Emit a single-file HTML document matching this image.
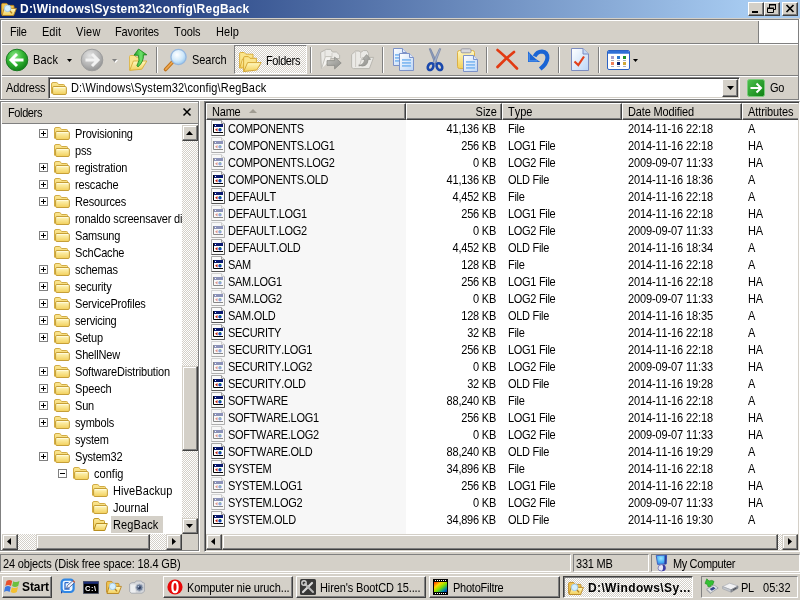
<!DOCTYPE html>
<html><head><meta charset="utf-8"><title>D:\Windows\System32\config\RegBack</title>
<style>
*{box-sizing:border-box;margin:0;padding:0}
html,body{width:800px;height:600px;overflow:hidden}
body{background:#D4D0C8;font-kerning:none;font-family:"Liberation Sans",sans-serif;font-size:11px;color:#000;line-height:13px;cursor:default}
#w{position:absolute;left:0;top:0;width:800px;height:600px;overflow:hidden;will-change:transform}
.a{position:absolute}
.t{position:absolute;white-space:nowrap;height:13px;line-height:13px;transform:scaleY(1.12);transform-origin:0 2px}
.hl{position:absolute;height:1px}
.vl{position:absolute;width:1px}
.dither{background-image:conic-gradient(#fff 25%,#D4D0C8 0 50%,#fff 0 75%,#D4D0C8 0);background-size:2px 2px}
.btn{position:absolute;background:#D4D0C8;border:1px solid;border-color:#fff #404040 #404040 #fff;box-shadow:inset -1px -1px 0 #808080,inset 1px 1px 0 #D4D0C8}
.sbtn{position:absolute;background:#D4D0C8;border:1px solid;border-color:#D4D0C8 #404040 #404040 #D4D0C8;box-shadow:inset -1px -1px 0 #808080,inset 1px 1px 0 #fff}
.sunk{position:absolute;border:1px solid;border-color:#808080 #fff #fff #808080}
.sunk2{position:absolute;border:1px solid;border-color:#808080 #fff #fff #808080;box-shadow:inset 1px 1px 0 #404040,inset -1px -1px 0 #D4D0C8}
.tsep{position:absolute;top:47px;width:2px;height:26px;border-left:1px solid #808080;border-right:1px solid #fff}
svg{position:absolute;overflow:visible}
</style></head>
<body><div id="w">
<svg width="0" height="0" style="position:absolute"><defs>
<linearGradient id="gF" x1="0" y1="0" x2="0" y2="1"><stop offset="0" stop-color="#FFF8C0"/><stop offset="1" stop-color="#F2CF5A"/></linearGradient>
<linearGradient id="gFb" x1="0" y1="0" x2="0" y2="1"><stop offset="0" stop-color="#FBE793"/><stop offset="1" stop-color="#EFCB58"/></linearGradient>
<radialGradient id="gGreen" cx="0.4" cy="0.3" r="0.75"><stop offset="0" stop-color="#8EE88A"/><stop offset="0.5" stop-color="#33B533"/><stop offset="1" stop-color="#0D7A14"/></radialGradient>
<radialGradient id="gGray" cx="0.4" cy="0.3" r="0.75"><stop offset="0" stop-color="#E4E4E4"/><stop offset="0.6" stop-color="#B4B4B4"/><stop offset="1" stop-color="#8E8E8E"/></radialGradient>
<radialGradient id="gLens" cx="0.4" cy="0.35" r="0.7"><stop offset="0" stop-color="#FFFFFF"/><stop offset="0.6" stop-color="#CFE8FA"/><stop offset="1" stop-color="#8EC3EE"/></radialGradient>
<linearGradient id="gDoc" x1="0" y1="0" x2="1" y2="1"><stop offset="0" stop-color="#FFFFFF"/><stop offset="1" stop-color="#BBD6F7"/></linearGradient>
<linearGradient id="gUp" x1="0" y1="0" x2="1" y2="0"><stop offset="0" stop-color="#1F9E1F"/><stop offset="0.55" stop-color="#6CE26C"/><stop offset="1" stop-color="#1E9A1E"/></linearGradient>
<radialGradient id="gMon" cx="0.45" cy="0.35" r="0.7"><stop offset="0" stop-color="#9CE4FF"/><stop offset="0.6" stop-color="#46B0F6"/><stop offset="1" stop-color="#3C7CE0"/></radialGradient>
<linearGradient id="gDis" x1="0" y1="0" x2="1" y2="1"><stop offset="0" stop-color="#C4C4C0"/><stop offset="1" stop-color="#8C8C88"/></linearGradient>
<linearGradient id="gGo" x1="0" y1="0" x2="1" y2="1"><stop offset="0" stop-color="#4DC24D"/><stop offset="1" stop-color="#0E7F12"/></linearGradient>
<linearGradient id="gRainbow" x1="0" y1="0" x2="1" y2="1"><stop offset="0" stop-color="#FF2A00"/><stop offset="0.3" stop-color="#FFD800"/><stop offset="0.55" stop-color="#7FE000"/><stop offset="0.8" stop-color="#0090A0"/><stop offset="1" stop-color="#0020C0"/></linearGradient>
<g id="folder"><path d="M0.5 13.5V4Q0.5 2.5 2 2.5H5.2Q6.2 2.5 6.8 3.4L7.6 4.5H12.5Q13.5 4.5 13.5 5.5V7" fill="url(#gFb)" stroke="#CDA437" stroke-width="0.9"/><rect x="1.6" y="6.5" width="13.8" height="8" rx="1.3" fill="url(#gF)" stroke="#C0962A" stroke-width="0.9"/><path d="M2.8 7.6H14.2" stroke="#FFFBDD" stroke-width="1"/></g>
<g id="folderopen"><path d="M1.5 13.5V4Q1.5 2.5 3 2.5H6Q7 2.5 7.6 3.4L8.2 4.5H11.5Q12.5 4.5 12.5 5.5V7.5" fill="url(#gFb)" stroke="#C39A2A"/><path d="M1.8 14.5L4.2 7.5H15.3L12.8 14.5Z" fill="url(#gF)" stroke="#B88E1E" stroke-linejoin="round"/></g>
<g id="fileico"><path d="M0.5 0.5H10.5L13.5 3.5V15.5H0.5Z" fill="#FAFAFA" stroke="#A8A8A8"/><path d="M13.5 3.5V15.5H0.5" fill="none" stroke="#585858"/><path d="M10.5 0.5V3.5H13.5" fill="#E8E8E8" stroke="#9C9C9C"/><rect x="2" y="4" width="10" height="9" fill="#fff"/><rect x="2" y="4" width="10" height="3" fill="#0A1A70"/><rect x="4" y="5" width="1" height="1" fill="#fff"/><path d="M2.5 4V12.5H12" fill="none" stroke="#000"/><path d="M6.5 8L4 9.7L6.5 11.4Z" fill="#C02010"/><circle cx="9" cy="9.8" r="1.7" fill="#1040C0"/><rect x="8.5" y="8" width="1.4" height="1.2" fill="#20A020"/></g>
<g id="expl"><path d="M0.6 13.5V3.6Q0.6 2.4 1.8 2.4H5Q6 2.4 6.6 3.3L7.2 4.4H12Q13 4.4 13 5.4V7.5" fill="#F0C452" stroke="#C08A20" stroke-width="0.9"/><path d="M1 14.5L3.2 7.4H15.4L12.6 14.5Z" fill="url(#gF)" stroke="#B88420" stroke-width="0.9" stroke-linejoin="round"/><circle cx="6.6" cy="7.4" r="3.3" fill="#D4F0FF" stroke="#9CC4E4" stroke-width="0.9"/><path d="M9 10L11 12.4" stroke="#B88420" stroke-width="1.4"/></g>
</defs></svg>
<div class="a" style="left:0;top:0;width:800px;height:18px;background:linear-gradient(90deg,#0A246A 0,#0A246A 18px,#A6CAF0 745px,#A6CAF0 100%)"></div>
<svg style="left:1px;top:1px" width="16" height="16"><use href="#expl"/></svg>
<div class="t" style="left:20px;top:2px;font-size:12px;font-weight:bold;letter-spacing:0.219px;color:#fff;">D:\Windows\System32\config\RegBack</div>
<div class="btn" style="left:748px;top:2px;width:16px;height:14px"></div>
<div class="btn" style="left:764px;top:2px;width:16px;height:14px"></div>
<div class="btn" style="left:782px;top:2px;width:16px;height:14px"></div>
<div class="a" style="left:752px;top:11px;width:6px;height:2px;background:#000"></div>
<svg style="left:767px;top:4px" width="9" height="9"><path d="M2.5 1V4M2.5 1H8.5V5.5H7M2 0.5H9M0.5 4.5H6.5V8.5H0.5ZM0 4H7" fill="none" stroke="#000" stroke-width="1"/></svg>
<svg style="left:786px;top:5px" width="8" height="7"><path d="M0.5 0L7.5 7M7.5 0L0.5 7" stroke="#000" stroke-width="1.7"/></svg>
<div class="hl" style="left:0;top:19px;width:799px;background:#808080"></div>
<div class="hl" style="left:1px;top:20px;width:798px;background:#fff"></div>
<div class="vl" style="left:0;top:19px;height:81px;background:#808080"></div>
<div class="vl" style="left:1px;top:20px;height:79px;background:#fff"></div>
<div class="vl" style="left:798px;top:19px;height:81px;background:#808080"></div>
<div class="vl" style="left:799px;top:19px;height:82px;background:#fff"></div>
<div class="hl" style="left:0;top:99px;width:799px;background:#808080"></div>
<div class="hl" style="left:0;top:100px;width:800px;background:#fff"></div>
<div class="a" style="left:759px;top:20px;width:39px;height:23px;background:#fff"></div>
<div class="vl" style="left:758px;top:21px;height:22px;background:#808080"></div>
<div class="hl" style="left:2px;top:43px;width:796px;background:#808080"></div>
<div class="hl" style="left:2px;top:44px;width:796px;background:#fff"></div>
<div class="hl" style="left:2px;top:75px;width:796px;background:#808080"></div>
<div class="hl" style="left:2px;top:76px;width:796px;background:#fff"></div>
<div class="t" style="left:10px;top:25px;letter-spacing:-0.309px;">File</div>
<div class="t" style="left:42px;top:25px;letter-spacing:0.008px;">Edit</div>
<div class="t" style="left:76px;top:25px;letter-spacing:0.164px;">View</div>
<div class="t" style="left:115px;top:25px;letter-spacing:-0.139px;">Favorites</div>
<div class="t" style="left:174px;top:25px;letter-spacing:-0.081px;">Tools</div>
<div class="t" style="left:216px;top:25px;letter-spacing:0.094px;">Help</div>
<svg style="left:5px;top:48px" width="24" height="24"><circle cx="12" cy="12" r="10.8" fill="url(#gGreen)" stroke="#1A7A22" stroke-width="1"/><path d="M12 6L6 12L12 18M6.5 12H18.5" fill="none" stroke="#fff" stroke-width="3" stroke-linejoin="miter" stroke-linecap="butt"/></svg>
<div class="t" style="left:33px;top:53px;letter-spacing:0.208px;">Back</div>
<svg style="left:67px;top:59px" width="5" height="3"><path d="M0 0H5L2.5 3Z" fill="#000"/></svg>
<svg style="left:80px;top:48px" width="24" height="24"><circle cx="12" cy="12" r="10.8" fill="url(#gGray)" stroke="#9C9C9C" stroke-width="1"/><path d="M12 6L18 12L12 18M17.5 12H5.5" fill="none" stroke="#F2F2F2" stroke-width="3" stroke-linejoin="miter" stroke-linecap="butt"/></svg>
<svg style="left:112px;top:59px" width="6" height="4"><path d="M1 1H6L3.5 4Z" fill="#fff"/><path d="M0 0H5L2.5 3Z" fill="#808080"/></svg>
<svg style="left:127px;top:47px" width="22" height="25"><path d="M2.5 23V9.6Q2.5 8.5 3.6 8.5H7.6L9.2 10.2H13.5V14" fill="#FAE48C" stroke="#DDB648" stroke-width="0.9"/><path d="M2.7 23.4L6.4 14H19.8L14.8 22.2Z" fill="url(#gF)" stroke="#D6AC3A" stroke-width="0.9" stroke-linejoin="round"/><path d="M7 8.2L11.6 2L19.8 7.8L16.4 7.9Q17 14.5 11 19.9L9.9 18.6Q13.2 13.6 11.4 8.3Z" fill="url(#gUp)" stroke="#168416" stroke-width="0.8" stroke-linejoin="round"/></svg>
<div class="tsep" style="left:156px"></div>
<svg style="left:163px;top:48px" width="25" height="24"><path d="M2.5 21.5L10 13.5" stroke="#C0741C" stroke-width="3.6" stroke-linecap="round"/><path d="M2.8 21.2L10 13.5" stroke="#F0A850" stroke-width="1.6" stroke-linecap="round"/><circle cx="15.5" cy="9" r="7.6" fill="url(#gLens)" stroke="#94B6DE" stroke-width="1.4"/></svg>
<div class="t" style="left:192px;top:53px;letter-spacing:-0.06px;">Search</div>
<div class="a dither" style="left:234px;top:45px;width:73px;height:29px;border:1px solid;border-color:#808080 #fff #fff #808080"></div>
<svg style="left:238px;top:51px" width="24" height="22"><path d="M1.6 16.8V2.6Q1.6 1.5 2.7 1.5H6.2L7.8 3.2H15V8" fill="#FBE58C" stroke="#D8A930" stroke-width="0.9"/><path d="M1.7 17L4.5 8H14.5L11.5 17Z" fill="url(#gF)" stroke="#D8A930" stroke-width="0.9" stroke-linejoin="round"/><path d="M5.6 20.4V6.8Q5.6 5.6 6.7 5.6H10.4L12 7.3H18.4V11" fill="#FBE58C" stroke="#D4A42C" stroke-width="0.9"/><path d="M5.7 20.6L9.6 11.6H23.2L18.8 19Z" fill="url(#gF)" stroke="#D0A02A" stroke-width="0.9" stroke-linejoin="round"/></svg>
<div class="t" style="left:266px;top:54px;letter-spacing:-0.384px;">Folders</div>
<div class="tsep" style="left:310px"></div>
<svg style="left:319px;top:48px" width="24" height="24"><path d="M2.4 20.4L1.6 4.4L7.2 1.4H11.8L13.4 4H17.4L20.6 7V10.5H10" fill="#EBEAE6" stroke="#B4B2AC" stroke-width="0.9" stroke-linejoin="round"/><path d="M6 2.4V9M13 5V9" stroke="#C8C6C0" stroke-width="0.8"/><path d="M2.6 20.6L6.4 8.6H12.4L11 12.5" fill="#F4F3F0" stroke="#BEBCB6" stroke-width="0.9" stroke-linejoin="round"/><path d="M8 12.6H15.6V9L22.2 15L15.6 21V17.4H8Z" fill="url(#gDis)" stroke="#868682" stroke-width="0.7" stroke-linejoin="round"/></svg>
<svg style="left:350px;top:49px" width="25" height="23"><path d="M1.6 18.4V5.6L5.6 2H9.4L10.6 3.6L13.4 1.6H17L18.6 4.6V8.4H23.6L19.4 19.6H3.4Z" fill="#EBEAE6" stroke="#B4B2AC" stroke-width="0.9" stroke-linejoin="round"/><path d="M5.6 2.6V18M10.6 4V9M18.4 8.6H12L9 18" fill="none" stroke="#C4C2BC" stroke-width="0.8"/><path d="M8.6 16.2Q13.6 16.6 14.8 10.4H12.4L16.6 5.6L20.6 10.4H18.2Q17.4 19.4 8.6 16.2Z" fill="url(#gDis)" stroke="#8E8E88" stroke-width="0.7" stroke-linejoin="round"/></svg>
<div class="tsep" style="left:382px"></div>
<svg style="left:392px;top:48px" width="23" height="24"><path d="M1.5 0.5H10.5L14.5 4.5V17.5H1.5Z" fill="url(#gDoc)" stroke="#7C92C8"/><path d="M10.5 0.5V4.5H14.5" fill="#DDE8FA" stroke="#7C92C8"/><rect x="3" y="6" width="6" height="1.8" fill="#86BCF2"/><rect x="3" y="9" width="6" height="1.8" fill="#86BCF2"/><rect x="3" y="12" width="6" height="1.8" fill="#86BCF2"/><path d="M7.5 5.5H17.5L21.5 9.5V22.5H7.5Z" fill="url(#gDoc)" stroke="#7C92C8"/><path d="M17.5 5.5V9.5H21.5" fill="#DDE8FA" stroke="#7C92C8"/><rect x="10" y="11" width="9" height="1.8" fill="#86BCF2"/><rect x="10" y="14" width="9" height="1.8" fill="#86BCF2"/><rect x="10" y="17" width="9" height="1.8" fill="#86BCF2"/></svg>
<svg style="left:426px;top:48px" width="18" height="24"><path d="M3.2 0.8L4.6 0.6L11.4 15.2L9 16Z" fill="#8C9CBC" stroke="#5C6C94" stroke-width="0.5"/><path d="M14.8 0.8L13.4 0.6L6.6 15.2L9 16Z" fill="#A4B2CC" stroke="#5C6C94" stroke-width="0.5"/><ellipse cx="4.6" cy="18.6" rx="2.6" ry="3.6" transform="rotate(28 4.6 18.6)" fill="#D4D0C8" stroke="#1A48AC" stroke-width="2.6"/><ellipse cx="13.4" cy="18.6" rx="2.6" ry="3.6" transform="rotate(-28 13.4 18.6)" fill="#D4D0C8" stroke="#1A48AC" stroke-width="2.6"/></svg>
<svg style="left:456px;top:48px" width="23" height="24"><rect x="1.5" y="2.5" width="17" height="18" rx="2" fill="url(#gF)" stroke="#DCB044"/><rect x="5" y="0.8" width="10" height="4" rx="1.2" fill="#D8D8DC" stroke="#9C9CA4"/><path d="M7.5 7.5H17.5L21.5 11.5V23.5H7.5Z" fill="url(#gDoc)" stroke="#7C92C8"/><path d="M17.5 7.5V11.5H21.5" fill="#DDE8FA" stroke="#7C92C8"/><rect x="10" y="13" width="9" height="1.8" fill="#86BCF2"/><rect x="10" y="16" width="9" height="1.8" fill="#86BCF2"/><rect x="10" y="19" width="9" height="1.8" fill="#86BCF2"/></svg>
<div class="tsep" style="left:486px"></div>
<svg style="left:495px;top:48px" width="24" height="23"><path d="M2.5 2Q10 8 22 20.5" stroke="#E23A12" stroke-width="2.6" stroke-linecap="round" fill="none"/><path d="M19 4Q10 11 2.5 19" stroke="#E23A12" stroke-width="2.8" stroke-linecap="round" fill="none"/></svg>
<svg style="left:527px;top:49px" width="23" height="22"><path d="M7.6 7.4Q10 2.3 15 2.4Q20.6 3 20.4 9Q20 14.6 13.2 20" fill="none" stroke="#1A64D4" stroke-width="4"/><path d="M1 2.2V13H13.4Q9 10.5 6.2 7.4Q3.6 5 1 2.2Z" fill="#1A64D4"/><path d="M2.2 4.5V11.8H10.5" fill="none" stroke="#4C90EC" stroke-width="1.2"/></svg>
<div class="tsep" style="left:558px"></div>
<svg style="left:570px;top:48px" width="20" height="24"><path d="M1.5 0.5H13L18.5 6V22.5H1.5Z" fill="url(#gDoc)" stroke="#7C8CC0"/><path d="M13 0.5V6H18.5" fill="#C4D8F6" stroke="#7C8CC0"/><path d="M4.5 13.5L8.3 17L14 8.5" fill="none" stroke="#E2401C" stroke-width="2.2" stroke-linejoin="miter"/></svg>
<div class="tsep" style="left:598px"></div>
<svg style="left:607px;top:50px" width="24" height="21"><rect x="0.5" y="0.5" width="22" height="19" rx="1.5" fill="#fff" stroke="#2A62C4"/><path d="M1 3.8V2Q1 1 2 1H21Q22 1 22 2V3.8Z" fill="#2F6FD6"/><rect x="4" y="6" width="3" height="3" fill="#A49CCC"/><rect x="4" y="10" width="3" height="1" fill="#A8B0C0"/><rect x="10" y="6" width="3" height="3" fill="#2C78D0"/><rect x="10" y="10" width="3" height="1" fill="#A8B0C0"/><rect x="16" y="6" width="3" height="3" fill="#1C9428"/><rect x="16" y="10" width="3" height="1" fill="#A8B0C0"/><rect x="4" y="12" width="3" height="3" fill="#F08058"/><rect x="4" y="16" width="3" height="1" fill="#A8B0C0"/><rect x="10" y="12" width="3" height="3" fill="#0C2470"/><rect x="10" y="16" width="3" height="1" fill="#A8B0C0"/><rect x="16" y="12" width="3" height="3" fill="#D0A838"/><rect x="16" y="16" width="3" height="1" fill="#A8B0C0"/></svg>
<svg style="left:633px;top:59px" width="5" height="3"><path d="M0 0H5L2.5 3Z" fill="#000"/></svg>
<div class="t" style="left:6px;top:81px;letter-spacing:-0.137px;">Address</div>
<div class="sunk2" style="left:48px;top:77px;width:692px;height:22px;background:#fff"></div>
<svg style="left:51px;top:80px" width="16" height="16"><use href="#folder"/></svg>
<div class="t" style="left:71px;top:81px;letter-spacing:0.137px;">D:\Windows\System32\config\RegBack</div>
<div class="btn" style="left:722px;top:79px;width:16px;height:18px"></div>
<svg style="left:727px;top:86px" width="7" height="4"><path d="M0 0h7l-3.5 4z" fill="#000"/></svg>
<svg style="left:747px;top:79px" width="18" height="18"><rect x="0.5" y="0.5" width="17" height="17" rx="2" fill="url(#gGo)" stroke="#7CCB7C"/><path d="M3.5 9H13M9.5 4.5L14 9L9.5 13.5" fill="none" stroke="#fff" stroke-width="2"/></svg>
<div class="t" style="left:770px;top:81px;letter-spacing:-0.344px;">Go</div>
<div class="hl" style="left:0;top:101px;width:199px;background:#808080"></div>
<div class="vl" style="left:0;top:101px;height:451px;background:#808080"></div>
<div class="hl" style="left:1px;top:102px;width:197px;background:#fff"></div>
<div class="vl" style="left:1px;top:102px;height:449px;background:#fff"></div>
<div class="vl" style="left:198px;top:102px;height:449px;background:#808080"></div>
<div class="hl" style="left:1px;top:550px;width:198px;background:#808080"></div>
<div class="vl" style="left:199px;top:101px;height:451px;background:#fff"></div>
<div class="hl" style="left:0;top:551px;width:200px;background:#fff"></div>
<div class="hl" style="left:2px;top:123px;width:196px;background:#808080"></div>
<div class="t" style="left:8px;top:106px;letter-spacing:-0.384px;">Folders</div>
<svg style="left:183px;top:108px" width="8" height="8"><path d="M0.5 0.5L7.5 7.5M7.5 0.5L0.5 7.5" stroke="#000" stroke-width="1.5"/></svg>
<div class="a" style="left:2px;top:124px;width:196px;height:426px;background:#fff"></div>
<div class="a" style="left:1px;top:124px;width:181px;height:410px;overflow:hidden">
<svg style="left:38px;top:5px" width="9" height="9"><rect x="0.5" y="0.5" width="8" height="8" fill="#fff" stroke="#808080"/><path d="M2 4.5H7M4.5 2V7" stroke="#000" fill="none"/></svg>
<svg style="left:53px;top:1px" width="16" height="16"><use href="#folder"/></svg>
<div class="t" style="left:74px;top:3px;letter-spacing:-0.18px;">Provisioning</div>
<svg style="left:53px;top:18px" width="16" height="16"><use href="#folder"/></svg>
<div class="t" style="left:74px;top:20px;letter-spacing:-0.18px;">pss</div>
<svg style="left:38px;top:39px" width="9" height="9"><rect x="0.5" y="0.5" width="8" height="8" fill="#fff" stroke="#808080"/><path d="M2 4.5H7M4.5 2V7" stroke="#000" fill="none"/></svg>
<svg style="left:53px;top:35px" width="16" height="16"><use href="#folder"/></svg>
<div class="t" style="left:74px;top:37px;letter-spacing:-0.18px;">registration</div>
<svg style="left:38px;top:56px" width="9" height="9"><rect x="0.5" y="0.5" width="8" height="8" fill="#fff" stroke="#808080"/><path d="M2 4.5H7M4.5 2V7" stroke="#000" fill="none"/></svg>
<svg style="left:53px;top:52px" width="16" height="16"><use href="#folder"/></svg>
<div class="t" style="left:74px;top:54px;letter-spacing:-0.143px;">rescache</div>
<svg style="left:38px;top:73px" width="9" height="9"><rect x="0.5" y="0.5" width="8" height="8" fill="#fff" stroke="#808080"/><path d="M2 4.5H7M4.5 2V7" stroke="#000" fill="none"/></svg>
<svg style="left:53px;top:69px" width="16" height="16"><use href="#folder"/></svg>
<div class="t" style="left:74px;top:71px;letter-spacing:-0.18px;">Resources</div>
<svg style="left:53px;top:86px" width="16" height="16"><use href="#folder"/></svg>
<div class="t" style="left:74px;top:88px;letter-spacing:-0.18px;">ronaldo screensaver di</div>
<svg style="left:38px;top:107px" width="9" height="9"><rect x="0.5" y="0.5" width="8" height="8" fill="#fff" stroke="#808080"/><path d="M2 4.5H7M4.5 2V7" stroke="#000" fill="none"/></svg>
<svg style="left:53px;top:103px" width="16" height="16"><use href="#folder"/></svg>
<div class="t" style="left:74px;top:105px;letter-spacing:-0.18px;">Samsung</div>
<svg style="left:53px;top:120px" width="16" height="16"><use href="#folder"/></svg>
<div class="t" style="left:74px;top:122px;letter-spacing:-0.18px;">SchCache</div>
<svg style="left:38px;top:141px" width="9" height="9"><rect x="0.5" y="0.5" width="8" height="8" fill="#fff" stroke="#808080"/><path d="M2 4.5H7M4.5 2V7" stroke="#000" fill="none"/></svg>
<svg style="left:53px;top:137px" width="16" height="16"><use href="#folder"/></svg>
<div class="t" style="left:74px;top:139px;letter-spacing:-0.18px;">schemas</div>
<svg style="left:38px;top:158px" width="9" height="9"><rect x="0.5" y="0.5" width="8" height="8" fill="#fff" stroke="#808080"/><path d="M2 4.5H7M4.5 2V7" stroke="#000" fill="none"/></svg>
<svg style="left:53px;top:154px" width="16" height="16"><use href="#folder"/></svg>
<div class="t" style="left:74px;top:156px;letter-spacing:-0.18px;">security</div>
<svg style="left:38px;top:175px" width="9" height="9"><rect x="0.5" y="0.5" width="8" height="8" fill="#fff" stroke="#808080"/><path d="M2 4.5H7M4.5 2V7" stroke="#000" fill="none"/></svg>
<svg style="left:53px;top:171px" width="16" height="16"><use href="#folder"/></svg>
<div class="t" style="left:74px;top:173px;letter-spacing:-0.18px;">ServiceProfiles</div>
<svg style="left:38px;top:192px" width="9" height="9"><rect x="0.5" y="0.5" width="8" height="8" fill="#fff" stroke="#808080"/><path d="M2 4.5H7M4.5 2V7" stroke="#000" fill="none"/></svg>
<svg style="left:53px;top:188px" width="16" height="16"><use href="#folder"/></svg>
<div class="t" style="left:74px;top:190px;letter-spacing:-0.212px;">servicing</div>
<svg style="left:38px;top:209px" width="9" height="9"><rect x="0.5" y="0.5" width="8" height="8" fill="#fff" stroke="#808080"/><path d="M2 4.5H7M4.5 2V7" stroke="#000" fill="none"/></svg>
<svg style="left:53px;top:205px" width="16" height="16"><use href="#folder"/></svg>
<div class="t" style="left:74px;top:207px;letter-spacing:-0.18px;">Setup</div>
<svg style="left:53px;top:222px" width="16" height="16"><use href="#folder"/></svg>
<div class="t" style="left:74px;top:224px;letter-spacing:-0.18px;">ShellNew</div>
<svg style="left:38px;top:243px" width="9" height="9"><rect x="0.5" y="0.5" width="8" height="8" fill="#fff" stroke="#808080"/><path d="M2 4.5H7M4.5 2V7" stroke="#000" fill="none"/></svg>
<svg style="left:53px;top:239px" width="16" height="16"><use href="#folder"/></svg>
<div class="t" style="left:74px;top:241px;letter-spacing:-0.18px;">SoftwareDistribution</div>
<svg style="left:38px;top:260px" width="9" height="9"><rect x="0.5" y="0.5" width="8" height="8" fill="#fff" stroke="#808080"/><path d="M2 4.5H7M4.5 2V7" stroke="#000" fill="none"/></svg>
<svg style="left:53px;top:256px" width="16" height="16"><use href="#folder"/></svg>
<div class="t" style="left:74px;top:258px;letter-spacing:-0.135px;">Speech</div>
<svg style="left:38px;top:277px" width="9" height="9"><rect x="0.5" y="0.5" width="8" height="8" fill="#fff" stroke="#808080"/><path d="M2 4.5H7M4.5 2V7" stroke="#000" fill="none"/></svg>
<svg style="left:53px;top:273px" width="16" height="16"><use href="#folder"/></svg>
<div class="t" style="left:74px;top:275px;letter-spacing:-0.18px;">Sun</div>
<svg style="left:38px;top:294px" width="9" height="9"><rect x="0.5" y="0.5" width="8" height="8" fill="#fff" stroke="#808080"/><path d="M2 4.5H7M4.5 2V7" stroke="#000" fill="none"/></svg>
<svg style="left:53px;top:290px" width="16" height="16"><use href="#folder"/></svg>
<div class="t" style="left:74px;top:292px;letter-spacing:-0.18px;">symbols</div>
<svg style="left:53px;top:307px" width="16" height="16"><use href="#folder"/></svg>
<div class="t" style="left:74px;top:309px;letter-spacing:-0.18px;">system</div>
<svg style="left:38px;top:328px" width="9" height="9"><rect x="0.5" y="0.5" width="8" height="8" fill="#fff" stroke="#808080"/><path d="M2 4.5H7M4.5 2V7" stroke="#000" fill="none"/></svg>
<svg style="left:53px;top:324px" width="16" height="16"><use href="#folder"/></svg>
<div class="t" style="left:74px;top:326px;letter-spacing:-0.18px;">System32</div>
<svg style="left:57px;top:345px" width="9" height="9"><rect x="0.5" y="0.5" width="8" height="8" fill="#fff" stroke="#808080"/><path d="M2 4.5H7" stroke="#000" fill="none"/></svg>
<svg style="left:72px;top:341px" width="16" height="16"><use href="#folder"/></svg>
<div class="t" style="left:93px;top:343px;letter-spacing:0.023px;">config</div>
<svg style="left:91px;top:358px" width="16" height="16"><use href="#folder"/></svg>
<div class="t" style="left:112px;top:360px;letter-spacing:0.07px;">HiveBackup</div>
<svg style="left:91px;top:375px" width="16" height="16"><use href="#folder"/></svg>
<div class="t" style="left:112px;top:377px;letter-spacing:-0.054px;">Journal</div>
<svg style="left:91px;top:392px" width="16" height="16"><use href="#folderopen"/></svg>
<div class="a" style="left:110px;top:392px;width:52px;height:17px;background:#D4D0C8"></div>
<div class="t" style="left:112px;top:394px;letter-spacing:0.108px;">RegBack</div>
</div>
<div class="a dither" style="left:182px;top:125px;width:16px;height:409px"></div>
<div class="sbtn" style="left:182px;top:125px;width:16px;height:16px"></div>
<svg style="left:186px;top:131px" width="7" height="4"><path d="M0 4h7l-3.5-4z" fill="#000"/></svg>
<div class="sbtn" style="left:182px;top:518px;width:16px;height:16px"></div>
<svg style="left:186px;top:524px" width="7" height="4"><path d="M0 0h7l-3.5 4z" fill="#000"/></svg>
<div class="sbtn" style="left:182px;top:366px;width:16px;height:85px"></div>
<div class="a dither" style="left:2px;top:534px;width:180px;height:16px"></div>
<div class="a" style="left:182px;top:534px;width:16px;height:16px;background:#D4D0C8"></div>
<div class="sbtn" style="left:2px;top:534px;width:16px;height:16px"></div>
<svg style="left:7px;top:538px" width="4" height="7"><path d="M4 0v7l-4-3.5z" fill="#000"/></svg>
<div class="sbtn" style="left:166px;top:534px;width:16px;height:16px"></div>
<svg style="left:172px;top:538px" width="4" height="7"><path d="M0 0v7l4-3.5z" fill="#000"/></svg>
<div class="sbtn" style="left:36px;top:534px;width:114px;height:16px"></div>
<div class="sunk2" style="left:204px;top:101px;width:596px;height:451px;background:#fff"></div>
<div class="a" style="left:206px;top:103px;width:592px;height:17px;background:#D4D0C8;overflow:hidden">
<div class="a" style="left:0px;top:0;width:200px;height:17px;border:1px solid;border-color:#fff #404040 #404040 #fff;box-shadow:inset -1px -1px 0 #808080"></div>
<div class="a" style="left:200px;top:0;width:96px;height:17px;border:1px solid;border-color:#fff #404040 #404040 #fff;box-shadow:inset -1px -1px 0 #808080"></div>
<div class="a" style="left:296px;top:0;width:120px;height:17px;border:1px solid;border-color:#fff #404040 #404040 #fff;box-shadow:inset -1px -1px 0 #808080"></div>
<div class="a" style="left:416px;top:0;width:120px;height:17px;border:1px solid;border-color:#fff #404040 #404040 #fff;box-shadow:inset -1px -1px 0 #808080"></div>
<div class="a" style="left:536px;top:0;width:80px;height:17px;border:1px solid;border-color:#fff #404040 #404040 #fff;box-shadow:inset -1px -1px 0 #808080"></div>
</div>
<div class="t" style="left:212px;top:105px;letter-spacing:-0.211px;">Name</div>
<div class="t" style="left:406px;top:105px;width:91px;text-align:right;">Size</div>
<div class="t" style="left:508px;top:105px;letter-spacing:-0.017px;">Type</div>
<div class="t" style="left:628px;top:105px;letter-spacing:-0.144px;">Date Modified</div>
<div class="t" style="left:748px;top:105px;letter-spacing:-0.097px;">Attributes</div>
<svg style="left:249px;top:109px" width="8" height="4"><path d="M0 4L4 0L8 4Z" fill="#A09C92"/></svg>
<div class="a" style="left:206px;top:120px;width:200px;height:414px;background:#F7F7F7"></div>
<svg style="left:211px;top:120px" width="15" height="16"><use href="#fileico"/></svg>
<div class="t" style="left:228px;top:122px;letter-spacing:-0.31px;">COMPONENTS</div>
<div class="t" style="left:406px;top:122px;letter-spacing:-0.22px;width:90px;text-align:right;">41,136 KB</div>
<div class="t" style="left:508px;top:122px;letter-spacing:-0.3px;">File</div>
<div class="t" style="left:628px;top:122px;letter-spacing:-0.12px;">2014-11-16 22:18</div>
<div class="t" style="left:748px;top:122px;letter-spacing:-0.2px;">A</div>
<svg style="left:211px;top:137px" width="15" height="16"><use href="#fileico" opacity="0.45"/></svg>
<div class="t" style="left:228px;top:139px;letter-spacing:-0.31px;">COMPONENTS.LOG1</div>
<div class="t" style="left:406px;top:139px;letter-spacing:-0.22px;width:90px;text-align:right;">256 KB</div>
<div class="t" style="left:508px;top:139px;letter-spacing:-0.3px;">LOG1 File</div>
<div class="t" style="left:628px;top:139px;letter-spacing:-0.12px;">2014-11-16 22:18</div>
<div class="t" style="left:748px;top:139px;letter-spacing:-0.2px;">HA</div>
<svg style="left:211px;top:154px" width="15" height="16"><use href="#fileico" opacity="0.45"/></svg>
<div class="t" style="left:228px;top:156px;letter-spacing:-0.31px;">COMPONENTS.LOG2</div>
<div class="t" style="left:406px;top:156px;letter-spacing:-0.22px;width:90px;text-align:right;">0 KB</div>
<div class="t" style="left:508px;top:156px;letter-spacing:-0.3px;">LOG2 File</div>
<div class="t" style="left:628px;top:156px;letter-spacing:-0.12px;">2009-09-07 11:33</div>
<div class="t" style="left:748px;top:156px;letter-spacing:-0.2px;">HA</div>
<svg style="left:211px;top:171px" width="15" height="16"><use href="#fileico"/></svg>
<div class="t" style="left:228px;top:173px;letter-spacing:-0.31px;">COMPONENTS.OLD</div>
<div class="t" style="left:406px;top:173px;letter-spacing:-0.22px;width:90px;text-align:right;">41,136 KB</div>
<div class="t" style="left:508px;top:173px;letter-spacing:-0.3px;">OLD File</div>
<div class="t" style="left:628px;top:173px;letter-spacing:-0.12px;">2014-11-16 18:36</div>
<div class="t" style="left:748px;top:173px;letter-spacing:-0.2px;">A</div>
<svg style="left:211px;top:188px" width="15" height="16"><use href="#fileico"/></svg>
<div class="t" style="left:228px;top:190px;letter-spacing:-0.31px;">DEFAULT</div>
<div class="t" style="left:406px;top:190px;letter-spacing:-0.22px;width:90px;text-align:right;">4,452 KB</div>
<div class="t" style="left:508px;top:190px;letter-spacing:-0.3px;">File</div>
<div class="t" style="left:628px;top:190px;letter-spacing:-0.12px;">2014-11-16 22:18</div>
<div class="t" style="left:748px;top:190px;letter-spacing:-0.2px;">A</div>
<svg style="left:211px;top:205px" width="15" height="16"><use href="#fileico" opacity="0.45"/></svg>
<div class="t" style="left:228px;top:207px;letter-spacing:-0.31px;">DEFAULT.LOG1</div>
<div class="t" style="left:406px;top:207px;letter-spacing:-0.22px;width:90px;text-align:right;">256 KB</div>
<div class="t" style="left:508px;top:207px;letter-spacing:-0.3px;">LOG1 File</div>
<div class="t" style="left:628px;top:207px;letter-spacing:-0.12px;">2014-11-16 22:18</div>
<div class="t" style="left:748px;top:207px;letter-spacing:-0.2px;">HA</div>
<svg style="left:211px;top:222px" width="15" height="16"><use href="#fileico" opacity="0.45"/></svg>
<div class="t" style="left:228px;top:224px;letter-spacing:-0.31px;">DEFAULT.LOG2</div>
<div class="t" style="left:406px;top:224px;letter-spacing:-0.22px;width:90px;text-align:right;">0 KB</div>
<div class="t" style="left:508px;top:224px;letter-spacing:-0.3px;">LOG2 File</div>
<div class="t" style="left:628px;top:224px;letter-spacing:-0.12px;">2009-09-07 11:33</div>
<div class="t" style="left:748px;top:224px;letter-spacing:-0.2px;">HA</div>
<svg style="left:211px;top:239px" width="15" height="16"><use href="#fileico"/></svg>
<div class="t" style="left:228px;top:241px;letter-spacing:-0.31px;">DEFAULT.OLD</div>
<div class="t" style="left:406px;top:241px;letter-spacing:-0.22px;width:90px;text-align:right;">4,452 KB</div>
<div class="t" style="left:508px;top:241px;letter-spacing:-0.3px;">OLD File</div>
<div class="t" style="left:628px;top:241px;letter-spacing:-0.12px;">2014-11-16 18:34</div>
<div class="t" style="left:748px;top:241px;letter-spacing:-0.2px;">A</div>
<svg style="left:211px;top:256px" width="15" height="16"><use href="#fileico"/></svg>
<div class="t" style="left:228px;top:258px;letter-spacing:-0.31px;">SAM</div>
<div class="t" style="left:406px;top:258px;letter-spacing:-0.22px;width:90px;text-align:right;">128 KB</div>
<div class="t" style="left:508px;top:258px;letter-spacing:-0.3px;">File</div>
<div class="t" style="left:628px;top:258px;letter-spacing:-0.12px;">2014-11-16 22:18</div>
<div class="t" style="left:748px;top:258px;letter-spacing:-0.2px;">A</div>
<svg style="left:211px;top:273px" width="15" height="16"><use href="#fileico" opacity="0.45"/></svg>
<div class="t" style="left:228px;top:275px;letter-spacing:-0.31px;">SAM.LOG1</div>
<div class="t" style="left:406px;top:275px;letter-spacing:-0.22px;width:90px;text-align:right;">256 KB</div>
<div class="t" style="left:508px;top:275px;letter-spacing:-0.3px;">LOG1 File</div>
<div class="t" style="left:628px;top:275px;letter-spacing:-0.12px;">2014-11-16 22:18</div>
<div class="t" style="left:748px;top:275px;letter-spacing:-0.2px;">HA</div>
<svg style="left:211px;top:290px" width="15" height="16"><use href="#fileico" opacity="0.45"/></svg>
<div class="t" style="left:228px;top:292px;letter-spacing:-0.31px;">SAM.LOG2</div>
<div class="t" style="left:406px;top:292px;letter-spacing:-0.22px;width:90px;text-align:right;">0 KB</div>
<div class="t" style="left:508px;top:292px;letter-spacing:-0.3px;">LOG2 File</div>
<div class="t" style="left:628px;top:292px;letter-spacing:-0.12px;">2009-09-07 11:33</div>
<div class="t" style="left:748px;top:292px;letter-spacing:-0.2px;">HA</div>
<svg style="left:211px;top:307px" width="15" height="16"><use href="#fileico"/></svg>
<div class="t" style="left:228px;top:309px;letter-spacing:-0.31px;">SAM.OLD</div>
<div class="t" style="left:406px;top:309px;letter-spacing:-0.22px;width:90px;text-align:right;">128 KB</div>
<div class="t" style="left:508px;top:309px;letter-spacing:-0.3px;">OLD File</div>
<div class="t" style="left:628px;top:309px;letter-spacing:-0.12px;">2014-11-16 18:35</div>
<div class="t" style="left:748px;top:309px;letter-spacing:-0.2px;">A</div>
<svg style="left:211px;top:324px" width="15" height="16"><use href="#fileico"/></svg>
<div class="t" style="left:228px;top:326px;letter-spacing:-0.31px;">SECURITY</div>
<div class="t" style="left:406px;top:326px;letter-spacing:-0.22px;width:90px;text-align:right;">32 KB</div>
<div class="t" style="left:508px;top:326px;letter-spacing:-0.3px;">File</div>
<div class="t" style="left:628px;top:326px;letter-spacing:-0.12px;">2014-11-16 22:18</div>
<div class="t" style="left:748px;top:326px;letter-spacing:-0.2px;">A</div>
<svg style="left:211px;top:341px" width="15" height="16"><use href="#fileico" opacity="0.45"/></svg>
<div class="t" style="left:228px;top:343px;letter-spacing:-0.31px;">SECURITY.LOG1</div>
<div class="t" style="left:406px;top:343px;letter-spacing:-0.22px;width:90px;text-align:right;">256 KB</div>
<div class="t" style="left:508px;top:343px;letter-spacing:-0.3px;">LOG1 File</div>
<div class="t" style="left:628px;top:343px;letter-spacing:-0.12px;">2014-11-16 22:18</div>
<div class="t" style="left:748px;top:343px;letter-spacing:-0.2px;">HA</div>
<svg style="left:211px;top:358px" width="15" height="16"><use href="#fileico" opacity="0.45"/></svg>
<div class="t" style="left:228px;top:360px;letter-spacing:-0.31px;">SECURITY.LOG2</div>
<div class="t" style="left:406px;top:360px;letter-spacing:-0.22px;width:90px;text-align:right;">0 KB</div>
<div class="t" style="left:508px;top:360px;letter-spacing:-0.3px;">LOG2 File</div>
<div class="t" style="left:628px;top:360px;letter-spacing:-0.12px;">2009-09-07 11:33</div>
<div class="t" style="left:748px;top:360px;letter-spacing:-0.2px;">HA</div>
<svg style="left:211px;top:375px" width="15" height="16"><use href="#fileico"/></svg>
<div class="t" style="left:228px;top:377px;letter-spacing:-0.31px;">SECURITY.OLD</div>
<div class="t" style="left:406px;top:377px;letter-spacing:-0.22px;width:90px;text-align:right;">32 KB</div>
<div class="t" style="left:508px;top:377px;letter-spacing:-0.3px;">OLD File</div>
<div class="t" style="left:628px;top:377px;letter-spacing:-0.12px;">2014-11-16 19:28</div>
<div class="t" style="left:748px;top:377px;letter-spacing:-0.2px;">A</div>
<svg style="left:211px;top:392px" width="15" height="16"><use href="#fileico"/></svg>
<div class="t" style="left:228px;top:394px;letter-spacing:-0.31px;">SOFTWARE</div>
<div class="t" style="left:406px;top:394px;letter-spacing:-0.22px;width:90px;text-align:right;">88,240 KB</div>
<div class="t" style="left:508px;top:394px;letter-spacing:-0.3px;">File</div>
<div class="t" style="left:628px;top:394px;letter-spacing:-0.12px;">2014-11-16 22:18</div>
<div class="t" style="left:748px;top:394px;letter-spacing:-0.2px;">A</div>
<svg style="left:211px;top:409px" width="15" height="16"><use href="#fileico" opacity="0.45"/></svg>
<div class="t" style="left:228px;top:411px;letter-spacing:-0.31px;">SOFTWARE.LOG1</div>
<div class="t" style="left:406px;top:411px;letter-spacing:-0.22px;width:90px;text-align:right;">256 KB</div>
<div class="t" style="left:508px;top:411px;letter-spacing:-0.3px;">LOG1 File</div>
<div class="t" style="left:628px;top:411px;letter-spacing:-0.12px;">2014-11-16 22:18</div>
<div class="t" style="left:748px;top:411px;letter-spacing:-0.2px;">HA</div>
<svg style="left:211px;top:426px" width="15" height="16"><use href="#fileico" opacity="0.45"/></svg>
<div class="t" style="left:228px;top:428px;letter-spacing:-0.31px;">SOFTWARE.LOG2</div>
<div class="t" style="left:406px;top:428px;letter-spacing:-0.22px;width:90px;text-align:right;">0 KB</div>
<div class="t" style="left:508px;top:428px;letter-spacing:-0.3px;">LOG2 File</div>
<div class="t" style="left:628px;top:428px;letter-spacing:-0.12px;">2009-09-07 11:33</div>
<div class="t" style="left:748px;top:428px;letter-spacing:-0.2px;">HA</div>
<svg style="left:211px;top:443px" width="15" height="16"><use href="#fileico"/></svg>
<div class="t" style="left:228px;top:445px;letter-spacing:-0.31px;">SOFTWARE.OLD</div>
<div class="t" style="left:406px;top:445px;letter-spacing:-0.22px;width:90px;text-align:right;">88,240 KB</div>
<div class="t" style="left:508px;top:445px;letter-spacing:-0.3px;">OLD File</div>
<div class="t" style="left:628px;top:445px;letter-spacing:-0.12px;">2014-11-16 19:29</div>
<div class="t" style="left:748px;top:445px;letter-spacing:-0.2px;">A</div>
<svg style="left:211px;top:460px" width="15" height="16"><use href="#fileico"/></svg>
<div class="t" style="left:228px;top:462px;letter-spacing:-0.31px;">SYSTEM</div>
<div class="t" style="left:406px;top:462px;letter-spacing:-0.22px;width:90px;text-align:right;">34,896 KB</div>
<div class="t" style="left:508px;top:462px;letter-spacing:-0.3px;">File</div>
<div class="t" style="left:628px;top:462px;letter-spacing:-0.12px;">2014-11-16 22:18</div>
<div class="t" style="left:748px;top:462px;letter-spacing:-0.2px;">A</div>
<svg style="left:211px;top:477px" width="15" height="16"><use href="#fileico" opacity="0.45"/></svg>
<div class="t" style="left:228px;top:479px;letter-spacing:-0.31px;">SYSTEM.LOG1</div>
<div class="t" style="left:406px;top:479px;letter-spacing:-0.22px;width:90px;text-align:right;">256 KB</div>
<div class="t" style="left:508px;top:479px;letter-spacing:-0.3px;">LOG1 File</div>
<div class="t" style="left:628px;top:479px;letter-spacing:-0.12px;">2014-11-16 22:18</div>
<div class="t" style="left:748px;top:479px;letter-spacing:-0.2px;">HA</div>
<svg style="left:211px;top:494px" width="15" height="16"><use href="#fileico" opacity="0.45"/></svg>
<div class="t" style="left:228px;top:496px;letter-spacing:-0.31px;">SYSTEM.LOG2</div>
<div class="t" style="left:406px;top:496px;letter-spacing:-0.22px;width:90px;text-align:right;">0 KB</div>
<div class="t" style="left:508px;top:496px;letter-spacing:-0.3px;">LOG2 File</div>
<div class="t" style="left:628px;top:496px;letter-spacing:-0.12px;">2009-09-07 11:33</div>
<div class="t" style="left:748px;top:496px;letter-spacing:-0.2px;">HA</div>
<svg style="left:211px;top:511px" width="15" height="16"><use href="#fileico"/></svg>
<div class="t" style="left:228px;top:513px;letter-spacing:-0.31px;">SYSTEM.OLD</div>
<div class="t" style="left:406px;top:513px;letter-spacing:-0.22px;width:90px;text-align:right;">34,896 KB</div>
<div class="t" style="left:508px;top:513px;letter-spacing:-0.3px;">OLD File</div>
<div class="t" style="left:628px;top:513px;letter-spacing:-0.12px;">2014-11-16 19:30</div>
<div class="t" style="left:748px;top:513px;letter-spacing:-0.2px;">A</div>
<div class="a dither" style="left:206px;top:534px;width:592px;height:16px"></div>
<div class="sbtn" style="left:206px;top:534px;width:16px;height:16px"></div>
<svg style="left:211px;top:538px" width="4" height="7"><path d="M4 0v7l-4-3.5z" fill="#000"/></svg>
<div class="sbtn" style="left:782px;top:534px;width:16px;height:16px"></div>
<svg style="left:788px;top:538px" width="4" height="7"><path d="M0 0v7l4-3.5z" fill="#000"/></svg>
<div class="sbtn" style="left:222px;top:534px;width:556px;height:16px"></div>
<div class="sunk" style="left:0;top:554px;width:571px;height:18px"></div>
<div class="sunk" style="left:573px;top:554px;width:76px;height:18px"></div>
<div class="sunk" style="left:651px;top:554px;width:149px;height:18px"></div>
<div class="t" style="left:3px;top:557px;letter-spacing:-0.144px;">24 objects (Disk free space: 18.4 GB)</div>
<div class="t" style="left:576px;top:557px;letter-spacing:-0.237px;">331 MB</div>
<svg style="left:655px;top:554px" width="14" height="18"><path d="M1.2 1.6L11.6 1.2L11.2 10L2.6 10.4Z" fill="url(#gMon)" stroke="#3A5CC0" stroke-width="0.9" stroke-linejoin="round"/><path d="M9.6 1.6L11.6 1.2L11.2 10L9.4 10.2Z" fill="#2A3C9C"/><path d="M3 14.2Q3 10.6 6.6 10.6Q10.6 10.6 10.6 14.2Q10.6 17 6.6 17Q3 17 3 14.2Z" fill="#E6E6F6" stroke="#5A5AA8" stroke-width="0.7"/><path d="M7.4 10.6Q10.6 10.8 10.6 14.2Q10.6 17 7 17Q9 14 7.4 10.6Z" fill="#3C3CA0"/></svg>
<div class="t" style="left:673px;top:557px;letter-spacing:-0.366px;">My Computer</div>
<div class="hl" style="left:0;top:573px;width:800px;background:#fff"></div>
<div class="btn" style="left:2px;top:576px;width:50px;height:22px"></div>
<svg style="left:5px;top:578px" width="16" height="16"><path d="M1.5 3Q4.5 1 7.2 3L6 8Q3.3 6.2 0.3 8Z" fill="#E8502C"/><path d="M8.3 3.2Q11 5 14.5 3L13.2 8Q10 9.8 7.1 8Z" fill="#6CC040"/><path d="M0.1 9Q3 7.2 5.8 9L4.6 14Q1.8 12 -1 14Z" fill="#3C78E0"/><path d="M6.9 9.2Q9.8 11 13 9L11.8 14Q8.8 16 5.7 14Z" fill="#F4C030"/></svg>
<div class="t" style="left:22px;top:580px;font-size:12px;font-weight:bold;letter-spacing:-0.069px;">Start</div>
<svg style="left:60px;top:578px" width="16" height="17"><path d="M1 15.8V5L4 13Z" fill="#1C3C9C"/><rect x="1.6" y="1.6" width="12" height="12.4" rx="3.2" fill="#EAF6FF" stroke="#2F86E4" stroke-width="2.2"/><path d="M5 4.6H8.6M5 4.6V11H9.6" fill="none" stroke="#2C6CD0" stroke-width="1.3"/><path d="M6.6 10.4L7.4 7.6L12.6 3L14.4 4.8L9.2 9.6Z" fill="#F0F4FF" stroke="#283C78" stroke-width="0.7"/><path d="M12.6 3L14.4 4.8L15.2 4L13.6 2.2Z" fill="#E0582C"/></svg>
<svg style="left:83px;top:581px" width="16" height="13"><rect x="0.4" y="0.4" width="15.2" height="12.2" fill="#000" stroke="#50586C" stroke-width="0.8"/><rect x="0.8" y="0.8" width="14.4" height="2" fill="#1C2E7C"/><text x="2" y="10.2" font-family="Liberation Sans,sans-serif" font-size="7.5" font-weight="bold" fill="#fff" textLength="11">C:\</text></svg>
<svg style="left:106px;top:579px" width="16" height="16"><use href="#expl"/></svg>
<svg style="left:129px;top:580px" width="16" height="14"><path d="M0.6 4L3 2.6H6L7 1H12.4L13.2 2.4L15.4 3V11.4L13 13.2H2.4L0.6 11.6Z" fill="#D6D8DC" stroke="#9A9EA6" stroke-width="0.7" stroke-linejoin="round"/><path d="M1.4 4.4H6.6V12.4H2.6L1.4 11.2Z" fill="#ECEEF0"/><circle cx="10.4" cy="7.6" r="3.6" fill="#6C7C98" stroke="#B4BCC8" stroke-width="1"/><circle cx="10.4" cy="7.6" r="1.6" fill="#2C3C5C"/><circle cx="9.6" cy="6.8" r="0.7" fill="#C8D8F0"/></svg>
<div class="btn" style="left:163px;top:576px;width:130px;height:22px"></div>
<svg style="left:167px;top:579px" width="16" height="16"><circle cx="8" cy="8" r="7.6" fill="#E80808"/><ellipse cx="8" cy="8" rx="2.6" ry="5.2" fill="none" stroke="#fff" stroke-width="2.2"/></svg>
<div class="t" style="left:187px;top:581px;letter-spacing:-0.127px;">Komputer nie uruch...</div>
<div class="btn" style="left:296px;top:576px;width:130px;height:22px"></div>
<svg style="left:300px;top:579px" width="16" height="16"><rect x="0" y="0" width="16" height="16" rx="1.5" fill="#383838"/><path d="M3 13L12 4" stroke="#D8D8D8" stroke-width="2.2" stroke-linecap="round"/><path d="M13 13L5 5" stroke="#B8B8B8" stroke-width="2" stroke-linecap="round"/><circle cx="4" cy="4" r="2.2" fill="none" stroke="#D0D0D0" stroke-width="1.4"/></svg>
<div class="t" style="left:320px;top:581px;letter-spacing:-0.118px;">Hiren&#x27;s BootCD 15....</div>
<div class="btn" style="left:429px;top:576px;width:131px;height:22px"></div>
<svg style="left:433px;top:579px" width="16" height="16"><rect x="0" y="0" width="15" height="16" fill="#000"/><rect x="1" y="3" width="13" height="10" fill="url(#gRainbow)"/><rect x="2" y="1" width="1" height="1" fill="#fff"/><rect x="2" y="14" width="1" height="1" fill="#fff"/><rect x="4" y="1" width="1" height="1" fill="#fff"/><rect x="4" y="14" width="1" height="1" fill="#fff"/><rect x="6" y="1" width="1" height="1" fill="#fff"/><rect x="6" y="14" width="1" height="1" fill="#fff"/><rect x="8" y="1" width="1" height="1" fill="#fff"/><rect x="8" y="14" width="1" height="1" fill="#fff"/><rect x="10" y="1" width="1" height="1" fill="#fff"/><rect x="10" y="14" width="1" height="1" fill="#fff"/><rect x="12" y="1" width="1" height="1" fill="#fff"/><rect x="12" y="14" width="1" height="1" fill="#fff"/></svg>
<div class="t" style="left:453px;top:581px;letter-spacing:-0.246px;">PhotoFiltre</div>
<div class="a dither" style="left:563px;top:576px;width:130px;height:22px;border:1px solid;border-color:#404040 #fff #fff #404040;box-shadow:inset 1px 1px 0 #808080"></div>
<svg style="left:568px;top:580px" width="16" height="16"><use href="#expl"/></svg>
<div class="t" style="left:588px;top:581px;font-size:12px;font-weight:bold;letter-spacing:0.371px;">D:\Windows\Sy...</div>
<div class="sunk" style="left:701px;top:576px;width:97px;height:22px"></div>
<svg style="left:704px;top:578px" width="16" height="16"><path d="M2.6 11.2L10 7L14.2 10L6.6 15Z" fill="#E4E6EA" stroke="#8A9098" stroke-width="0.7"/><path d="M2.6 11.2V12.4L6.6 16V15Z" fill="#9CA0A8"/><path d="M5.6 11L9.4 8.8L11.6 10.4L7.8 12.8Z" fill="#3A4A8C"/><path d="M1 5.4L2.8 0.8L5 3Q8 1.6 10 3.4L8.6 7Q7 6.4 6.6 8.4L4 8.8L3.4 6.6Z" fill="#34C034" stroke="#1C8C1C" stroke-width="0.6" stroke-linejoin="round"/></svg>
<svg style="left:722px;top:582px" width="17" height="11"><path d="M0.6 4.6L7.6 1.2L16 4L9 7.8Z" fill="#F2F2F4" stroke="#A4A8B0" stroke-width="0.6" stroke-linejoin="round"/><path d="M0.6 4.6V6.8L9 10.2V7.8Z" fill="#C4C8CE" stroke="#9498A0" stroke-width="0.5"/><path d="M9 7.8V10.2L16 6.2V4Z" fill="#8C9098" stroke="#70747C" stroke-width="0.5"/><path d="M11 7.4L14.4 5.4V6.4L11 8.4Z" fill="#40444C"/></svg>
<div class="t" style="left:741px;top:581px;letter-spacing:-0.234px;">PL</div>
<div class="t" style="left:763px;top:581px;letter-spacing:0.014px;">05:32</div>
</div></body></html>
